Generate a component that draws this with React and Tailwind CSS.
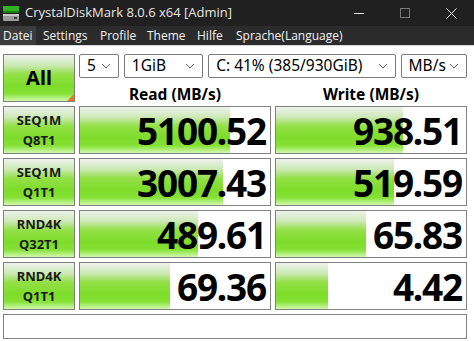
import React from "react";

const GREEN =
  "bg-[linear-gradient(to_bottom,#eef2ec_0%,#cde9b6_22%,#93e046_42%,#7ddc2a_68%,#86e236_84%,#d2f8b0_100%)]";

const rows = [
  { a: "SEQ1M", b: "Q8T1", read: "5100.52", rw: 150, write: "938.51", ww: 127 },
  { a: "SEQ1M", b: "Q1T1", read: "3007.43", rw: 143, write: "519.59", ww: 118 },
  { a: "RND4K", b: "Q32T1", read: "489.61", rw: 118, write: "65.83", ww: 90 },
  { a: "RND4K", b: "Q1T1", read: "69.36", rw: 90, write: "4.42", ww: 52 },
];

const menu = [
  ["Settings", "w-[57px]"],
  ["Profile", "w-[47px]"],
  ["Theme", "w-[50px]"],
  ["Hilfe", "w-[39px]"],
  ["Sprache(Language)", "w-[110px]"],
];

function Chevron() {
  return (
    <svg width="10" height="6" viewBox="0 0 10 6" className="shrink-0">
      <path d="M1 1l4 4 4-4" fill="none" stroke="#606060" strokeWidth="1" />
    </svg>
  );
}

function Select({ w, label }) {
  return (
    <div
      className={`${w} h-[24px] border border-[#7a7a7a] rounded-[2px] bg-white flex items-center justify-between pl-[7px] pr-[7px] text-[15.5px] text-black`}
    >
      <span className="leading-none">{label}</span>
      <Chevron />
    </div>
  );
}

function Value({ text, width }) {
  return (
    <div className="relative h-[48px] border border-[#808080] bg-white">
      <div className={`absolute left-0 top-0 bottom-0 ${GREEN}`} style={{ width }} />
      <div className="relative h-full flex items-center justify-end pr-[4px] text-[37px] font-bold leading-none text-black tracking-[-1.2px]">
        {text}
      </div>
    </div>
  );
}

export default function App() {
  return (
    <div className="w-[474px] h-[341px] bg-white flex flex-col overflow-hidden font-['Noto_Sans','Open_Sans',sans-serif]">
      {/* title bar */}
      <div className="h-[26px] bg-[#202020] flex items-center text-[#e6e6e6]">
        <svg width="16" height="16" viewBox="0 0 16 16" className="ml-[3px]">
          <rect x="0" y="1" width="16" height="5" fill="#2fb21f" />
          <rect x="0" y="6" width="16" height="2" fill="#1c7d14" />
          <rect x="0" y="9" width="16" height="7" rx="1" fill="#9a9a9a" />
          <rect x="0" y="9" width="16" height="2" fill="#c8c8c8" />
          <rect x="11" y="12" width="3" height="2" fill="#3a3a3a" />
        </svg>
        <span className="ml-[6px] text-[13px] font-['Open_Sans',sans-serif]">CrystalDiskMark 8.0.6 x64 [Admin]</span>
        <div className="ml-auto flex items-center h-full">
          <div className="w-[46px] h-full flex items-center justify-center">
            <div className="w-[10px] h-px bg-[#e6e6e6]" />
          </div>
          <div className="w-[46px] h-full flex items-center justify-center">
            <div className="w-[10px] h-[10px] border border-[#777]" />
          </div>
          <div className="w-[46px] h-full flex items-center justify-center">
            <svg width="11" height="11" viewBox="0 0 11 11">
              <path d="M0.5 0.5l10 10M10.5 0.5l-10 10" stroke="#e6e6e6" strokeWidth="1" />
            </svg>
          </div>
        </div>
      </div>
      {/* menu bar */}
      <div className="h-[19px] bg-[#2b2b2b] flex items-stretch text-[12px] text-[#f2f2f2] leading-none font-['Open_Sans',sans-serif]">
        <div className="w-[36px] pl-[3px] bg-[#3b3b3b] flex items-center">Datei</div>
        <div className="pl-[7px] flex items-stretch">
          {menu.map(([t, w]) => (
            <div key={t} className={`${w} flex items-center whitespace-nowrap`}>
              {t}
            </div>
          ))}
        </div>
      </div>
      <div className="h-px bg-[#d9d9d9]" />
      {/* body */}
      <div className="pl-[3px] pt-[8px] flex flex-col gap-[4px]">
        <div className="grid grid-cols-[72px_192px_192px] gap-x-[4px] gap-y-[4px]">
          <div className={`relative h-[48px] border border-[#808080] ${GREEN} flex items-center justify-center text-[20px] font-bold text-black`}>
            All
            <div className="absolute right-0 bottom-0 w-0 h-0 border-l-[7px] border-l-transparent border-b-[7px] border-b-[#f07818]" />
          </div>
          <div className="col-span-2 flex flex-col h-[48px]">
            <div className="flex gap-[5px]">
              <Select w="w-[40px]" label="5" />
              <Select w="w-[80px]" label="1GiB" />
              <Select w="w-[189px]" label="C: 41% (385/930GiB)" />
              <Select w="w-[67px]" label="MB/s" />
            </div>
            <div className="flex-1 grid grid-cols-[192px_192px] gap-x-[4px] text-[15.5px] font-bold text-black">
              <div className="flex items-end justify-center leading-none pb-[0px]">Read (MB/s)</div>
              <div className="flex items-end justify-center leading-none pb-[0px]">Write (MB/s)</div>
            </div>
          </div>
          {rows.map((r, i) => (
            <React.Fragment key={i}>
              <div className={`h-[48px] border border-[#808080] ${GREEN} flex flex-col items-center justify-center text-[13px] font-bold text-[#1a1a1a] leading-[20px]`}>
                <span>{r.a}</span>
                <span>{r.b}</span>
              </div>
              <Value text={r.read} width={r.rw} />
              <Value text={r.write} width={r.ww} />
            </React.Fragment>
          ))}
        </div>
        <div className="w-[464px] h-[25px] border border-[#808080] bg-white" />
      </div>
    </div>
  );
}
